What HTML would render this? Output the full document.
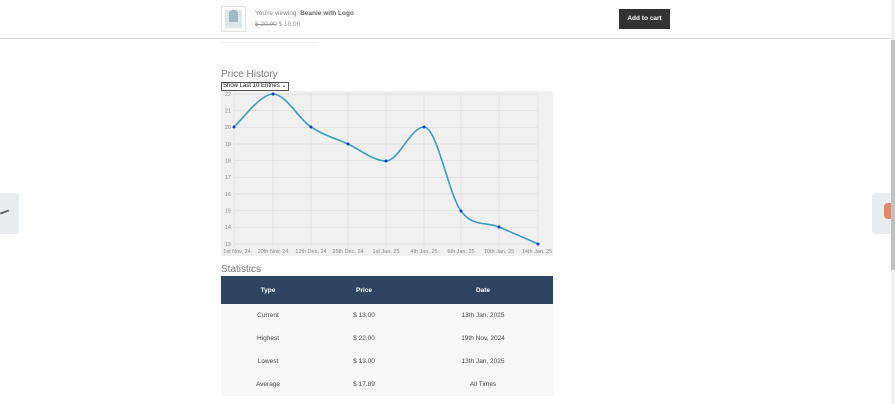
<!DOCTYPE html>
<html><head><style>
*{margin:0;padding:0;box-sizing:border-box}
body{width:895px;height:404px;overflow:hidden;background:#fff;font-family:"Liberation Sans",sans-serif;position:relative;color:#333}
.abs{position:absolute}
table{border-collapse:collapse;width:332px;font-size:6.5px;table-layout:fixed}
th{background:#2d4560;color:#fff;height:28px;font-weight:bold}
td{background:#f8f8f8;height:23px;text-align:center;color:#444}
</style></head><body>
<div class="abs" style="left:0;top:0;width:891px;height:39px;border-bottom:1px solid #ddd;background:#fff"></div>
<div class="abs" style="left:221px;top:6px;width:25px;height:26px;border:1px solid #e5e5e5;background:#fff"><div style="margin:3px;width:17px;height:18px;background:#dde8ee"><div style="margin:3px 4px;width:9px;height:12px;background:#9fb8c6;border-radius:4px 4px 1px 1px"></div></div></div>
<div class="abs" style="left:255px;top:10px;font-size:6.5px;color:#888">You're viewing: <b style="color:#666">Beanie with Logo</b></div>
<div class="abs" style="left:255px;top:21px;font-size:6.5px;color:#999"><s>$ 20.00</s> $ 18.00</div>
<div class="abs" style="left:619px;top:9px;width:51px;height:20px;background:#333;color:#fff;font-size:6.5px;font-weight:bold;text-align:center;line-height:20px">Add to cart</div>
<div class="abs" style="left:221px;top:42px;width:97px;height:1px;background:#f2f2f2"></div>
<div class="abs" style="left:221px;top:69px;font-size:10px;color:#777">Price History</div>
<div class="abs" style="left:221px;top:82px;width:68px;height:9px;border:1px solid #555;font-size:6px;line-height:7px;padding-left:1px;color:#111;background:#fff">Show Last 10 Entries ⌄</div>
<svg class="abs" style="left:221px;top:91px" width="332" height="165" viewBox="221 91 332 165">
<rect x="221" y="91" width="332" height="165" fill="#f0f0f0"/>
<g stroke="#dcdcdc" stroke-width="0.7">
<line x1="234" x2="538" y1="94" y2="94"/><line x1="234" x2="538" y1="110.7" y2="110.7"/><line x1="234" x2="538" y1="127.3" y2="127.3"/><line x1="234" x2="538" y1="144" y2="144"/><line x1="234" x2="538" y1="160.7" y2="160.7"/><line x1="234" x2="538" y1="177.3" y2="177.3"/><line x1="234" x2="538" y1="194" y2="194"/><line x1="234" x2="538" y1="210.7" y2="210.7"/><line x1="234" x2="538" y1="227.3" y2="227.3"/><line x1="234" x2="538" y1="244" y2="244"/>
<line y1="94" y2="247" x1="234" x2="234"/><line y1="94" y2="247" x1="273" x2="273"/><line y1="94" y2="247" x1="311" x2="311"/><line y1="94" y2="247" x1="348" x2="348"/><line y1="94" y2="247" x1="386" x2="386"/><line y1="94" y2="247" x1="424" x2="424"/><line y1="94" y2="247" x1="461" x2="461"/><line y1="94" y2="247" x1="499" x2="499"/><line y1="94" y2="247" x1="538" x2="538"/>
</g>
<g font-size="5.5" fill="#888" text-anchor="end" font-family="Liberation Sans">
<text x="231" y="96">22</text><text x="231" y="112.5">21</text><text x="231" y="129">20</text><text x="231" y="146">19</text><text x="231" y="162.5">18</text><text x="231" y="179">17</text><text x="231" y="196">16</text><text x="231" y="212.5">15</text><text x="231" y="229">14</text><text x="231" y="246">13</text>
</g>
<g font-size="5.5" fill="#888" text-anchor="middle" font-family="Liberation Sans">
<text x="237" y="253">1st Nov, 24</text><text x="273" y="253">20th Nov, 24</text><text x="311" y="253">12th Dec, 24</text><text x="348" y="253">25th Dec, 24</text><text x="386" y="253">1st Jan, 25</text><text x="424" y="253">4th Jan, 25</text><text x="461" y="253">6th Jan, 25</text><text x="499" y="253">10th Jan, 25</text><text x="537" y="253">14th Jan, 25</text>
</g>
<path d="M234,127 C240.5,121.5 260.2,94 273,94 C285.8,94 298.5,118.7 311,127 C323.5,135.3 335.5,138.3 348,144 C360.5,149.7 373.3,161 386,161 C398.7,161 411,127 424,127 C437,127 448.5,194.3 461,211 C473.5,227.7 486.2,221.5 499,227 C511.8,232.5 531.5,241 538,244" fill="none" stroke="#3a9cc8" stroke-width="1.6"/>
<g fill="#0a3be0"><circle cx="234" cy="127" r="1.5"/><circle cx="273" cy="94" r="1.5"/><circle cx="311" cy="127" r="1.5"/><circle cx="348" cy="144" r="1.5"/><circle cx="386" cy="161" r="1.5"/><circle cx="424" cy="127" r="1.5"/><circle cx="461" cy="211" r="1.5"/><circle cx="499" cy="227" r="1.5"/><circle cx="538" cy="244" r="1.5"/></g>
</svg>
<div class="abs" style="left:221px;top:264px;font-size:10px;color:#777">Statistics</div>
<table class="abs" style="left:221px;top:276px">
<colgroup><col style="width:94px"><col style="width:98px"><col style="width:140px"></colgroup>
<tr><th>Type</th><th>Price</th><th>Date</th></tr>
<tr><td>Current</td><td>$ 13.00</td><td>13th Jan, 2025</td></tr>
<tr><td>Highest</td><td>$ 22.00</td><td>19th Nov, 2024</td></tr>
<tr><td>Lowest</td><td>$ 13.00</td><td>13th Jan, 2025</td></tr>
<tr><td>Average</td><td>$ 17.89</td><td>All Times</td></tr>
</table>
<div class="abs" style="left:0;top:193px;width:19px;height:41px;background:#e9edf0;border-radius:0 3px 3px 0"><div style="position:absolute;left:0;top:18px;width:9px;height:2px;background:#666;transform:rotate(-20deg)"></div></div>
<div class="abs" style="left:872px;top:193px;width:19px;height:41px;background:#e9edf0;border-radius:3px 0 0 3px"><div style="position:absolute;left:12px;top:10px;width:7px;height:16px;background:#e8866a;border-radius:4px 0 0 4px"></div></div>
<div class="abs" style="left:891px;top:0;width:4px;height:404px;background:#f0f0f0"><div style="margin-top:40px;width:4px;height:230px;background:#c1c1c1"></div></div>
</body></html>
